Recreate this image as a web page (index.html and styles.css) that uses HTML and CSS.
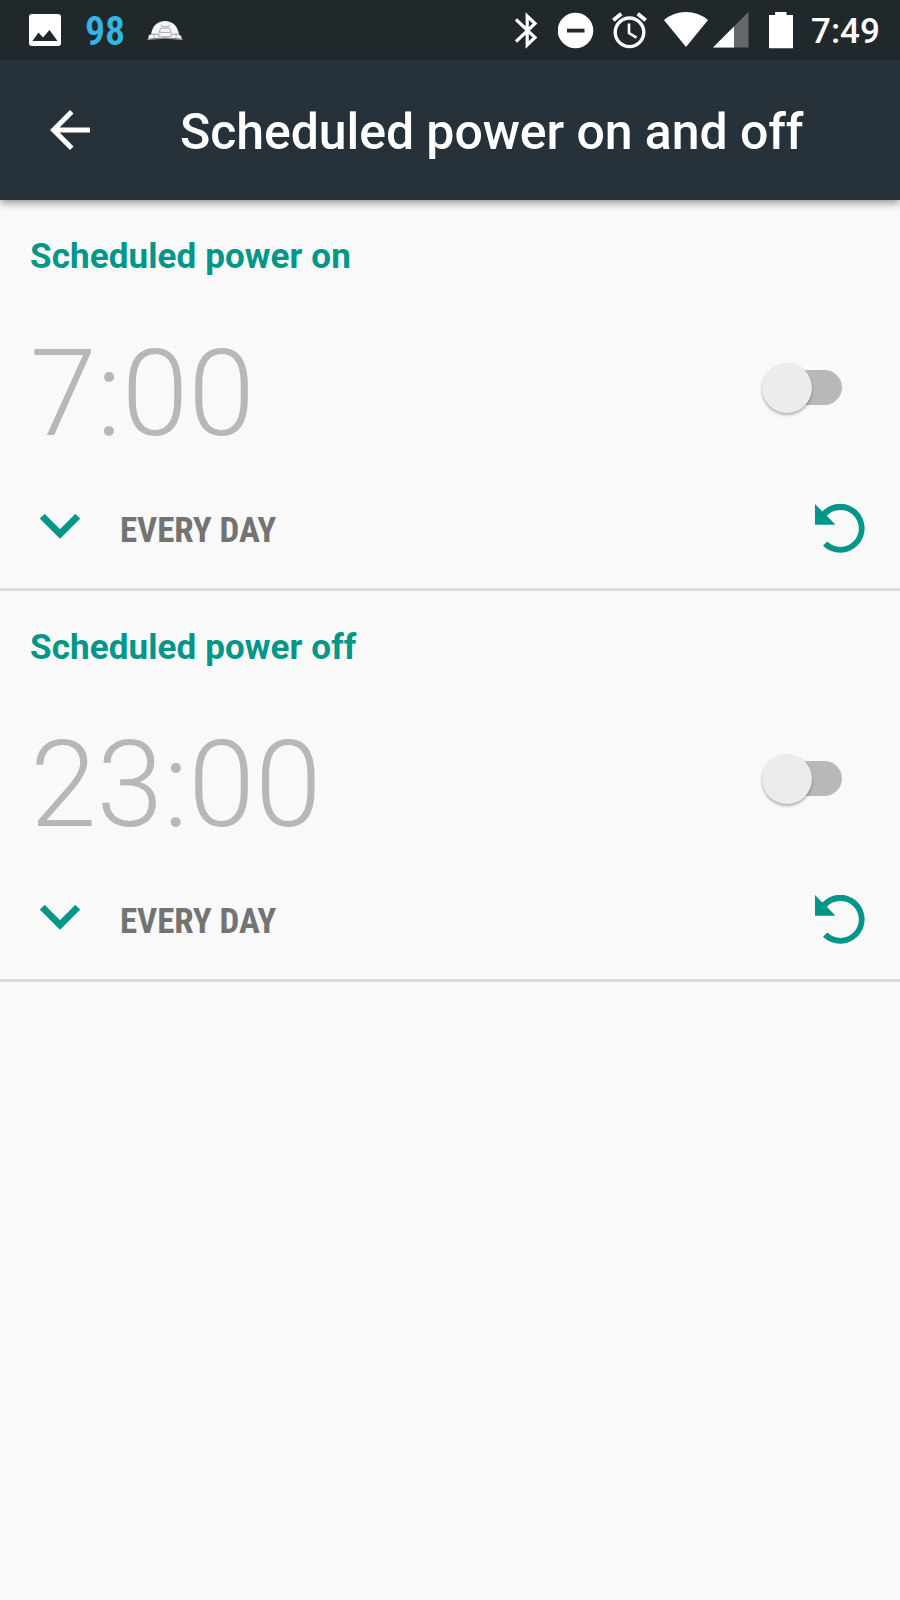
FILE: index.html
```html
<!DOCTYPE html>
<html lang="en">
<head>
    <meta charset="UTF-8">
    <meta name="viewport" content="width=device-width, initial-scale=1.0">
    <title>Scheduled power on and off</title>
    <link rel="stylesheet" href="styles.css">
</head>
<body>
    <div class="status-bar">
        <div class="status-left">
            <svg class="icon-image" width="32" height="32" viewBox="0 0 32 32">
                <rect width="32" height="32" rx="3" fill="#fff"/>
                <path d="M3.5 27L9.5 18.5L14 23.5L20.5 16L28.5 27Z" fill="#21282b"/>
            </svg>
            <span class="battery-level">98</span>
            <svg class="icon-dome" width="37" height="21" viewBox="0 0 38 22">
                <path d="M4 15C5 6 11 1 18.500 1S32 6 33 15L35.500 17L36 20Q18.500 17 1 20L1.500 16Z" fill="#f4f4f4"/>
                <path d="M14 5L15.500 7H22L23.500 5M14 8.500H23.500L25 14V17.500H12V14ZM4 15H12M25 15H33M7 14V18M30 14V18M13 13H24" fill="none" stroke="#a5a7a8" stroke-width="1"/>
                <path d="M0 20.500Q18.500 17.500 37 20.500" fill="none" stroke="#9a9d9e" stroke-width="1"/>
            </svg>
        </div>
        <div class="status-right">
            <!-- bluetooth -->
            <svg width="43" height="60" viewBox="515 0 43 60" fill="none" stroke="#fff" stroke-width="3.200">
                <path d="M516 19.500L535 37.500L527.200 45V16L535 23.500L516 41.500"/>
            </svg>
            <!-- do not disturb -->
            <svg width="54" height="60" viewBox="558 0 54 60">
                <circle cx="575.500" cy="30.500" r="17.800" fill="#fff"/>
                <rect x="567" y="28.700" width="17.500" height="3.800" fill="#21282b"/>
            </svg>
            <!-- alarm -->
            <svg width="50" height="60" viewBox="612 0 50 60" fill="none" stroke="#fff">
                <circle cx="629.500" cy="32.300" r="14.300" stroke-width="3.400"/>
                <path d="M629 23.500V33L636.500 37.700" stroke-width="2.600"/>
                <path d="M613.300 20.300L621.300 13.700M637.700 13.700L645.700 20.300" stroke-width="3.800"/>
            </svg>
            <!-- wifi -->
            <svg width="50" height="60" viewBox="662 0 50 60">
                <path d="M686 47L664 20Q673.500 12 686 12T708 20Z" fill="#fff"/>
            </svg>
            <!-- mobile signal -->
            <svg width="52" height="60" viewBox="712 0 52 60">
                <path d="M713 47.500L748.500 12V47.500Z" fill="#64686b"/>
                <path d="M713 47.500L734 26.500V47.500Z" fill="#fff"/>
            </svg>
            <!-- battery -->
            <svg width="47" height="60" viewBox="764 0 47 60">
                <path d="M775 12H786.500V15H793V48.300H769V15H775Z" fill="#fff"/>
            </svg>
            <span class="clock">7:49</span>
        </div>
    </div>

    <header class="app-bar">
        <svg class="back-arrow" width="40" height="40" viewBox="0 0 16 16">
            <path d="M16 7H3.830L9.420 1.410L8 0L0 8L8 16L9.410 14.590L3.830 9H16Z" fill="#fff"/>
        </svg>
        <h1>Scheduled power on and off</h1>
    </header>

    <main>
        <section class="schedule">
            <h2>Scheduled power on</h2>
            <div class="time-row">
                <span class="time">7:00</span>
                <div class="switch"><div class="thumb"></div></div>
            </div>
            <div class="repeat-row">
                <svg class="chevron" width="40" height="25" viewBox="0 0 40 25">
                    <path d="M2.300 2.300L20 20L37.700 2.300" fill="none" stroke="#009688" stroke-width="6.800"/>
                </svg>
                <span class="repeat">EVERY DAY</span>
                <svg class="reset" width="50" height="49" viewBox="0 0 50 49">
                    <path d="M0 0L7.300 7.500A24.500 24.500 0 1 1 8 41.800L12.300 37.500A18.500 18.500 0 1 0 11.800 11.800L20.500 20.700H0Z" fill="#009688"/>
                </svg>
            </div>
        </section>

        <section class="schedule">
            <h2>Scheduled power off</h2>
            <div class="time-row">
                <span class="time">23:00</span>
                <div class="switch"><div class="thumb"></div></div>
            </div>
            <div class="repeat-row">
                <svg class="chevron" width="40" height="25" viewBox="0 0 40 25">
                    <path d="M2.300 2.300L20 20L37.700 2.300" fill="none" stroke="#009688" stroke-width="6.800"/>
                </svg>
                <span class="repeat">EVERY DAY</span>
                <svg class="reset" width="50" height="49" viewBox="0 0 50 49">
                    <path d="M0 0L7.300 7.500A24.500 24.500 0 1 1 8 41.800L12.300 37.500A18.500 18.500 0 1 0 11.800 11.800L20.500 20.700H0Z" fill="#009688"/>
                </svg>
            </div>
        </section>
    </main>
</body>
</html>
```

FILE: styles.css
```css
* {
    box-sizing: border-box;
    margin: 0;
    padding: 0;
}

body {
    background: #f9f9f9;
    font-family: Roboto, sans-serif;
    min-height: 100vh;
}

svg {
    display: block;
    flex: none;
}

.status-bar {
    position: relative;
    z-index: 1;
    display: flex;
    justify-content: space-between;
    height: 60px;
    padding: 0 20px 0 29px;
    background: #21282b;
    color: #fff;
}

.status-left,
.status-right {
    display: flex;
    align-items: center;
}

.battery-level {
    width: 38px;
    margin: 0 24px 0 24px;
    padding-top: 3px;
    color: #33b5e5;
    font-family: "Roboto Condensed", Roboto, sans-serif;
    font-stretch: condensed;
    font-size: 40px;
    font-weight: 600;
    line-height: 60px;
}

.clock {
    width: 69px;
    padding-top: 3px;
    font-size: 35px;
    font-weight: 500;
    line-height: 60px;
}

.app-bar {
    position: relative;
    display: flex;
    align-items: center;
    height: 140px;
    padding-left: 50px;
    background: #263139;
    box-shadow: 0 3px 8px rgba(0, 0, 0, 0.4);
}

.app-bar h1 {
    margin-left: 90px;
    padding-top: 4px;
    color: #fff;
    font-size: 50px;
    font-weight: 500;
    letter-spacing: -0.07px;
    line-height: 60px;
    white-space: nowrap;
}

.schedule {
    height: 391px;
    padding: 0 35px 0 30px;
    border-bottom: 3px solid #dcdcdc;
}

.schedule h2 {
    height: 110px;
    color: #009688;
    font-size: 35px;
    font-weight: 700;
    letter-spacing: 0.1px;
    line-height: 113px;
}

.time-row {
    display: flex;
    align-items: center;
    justify-content: space-between;
    height: 168px;
    padding-right: 23px;
}

.time {
    color: #b7b7b7;
    font-size: 120px;
    font-weight: 300;
    line-height: 168px;
}

.switch {
    display: flex;
    align-items: center;
    width: 70px;
    height: 35px;
    margin-bottom: 13px;
    border-radius: 18px;
    background: #b9b9b9;
}

.thumb {
    flex: none;
    width: 50px;
    height: 50px;
    margin-left: -10px;
    border-radius: 50%;
    background: #ececec;
    box-shadow: 0 2px 3px rgba(0, 0, 0, 0.3);
}

.repeat-row {
    display: flex;
    align-items: center;
    height: 103px;
}

.chevron {
    margin: 0 40px 6px 10px;
}

.repeat {
    padding-top: 2px;
    color: #737373;
    font-family: "Roboto Condensed", Roboto, sans-serif;
    font-stretch: condensed;
    font-size: 35px;
    font-weight: 700;
    letter-spacing: -0.1px;
    line-height: 101px;
}

.reset {
    margin: 0 0 2px auto;
}
```
